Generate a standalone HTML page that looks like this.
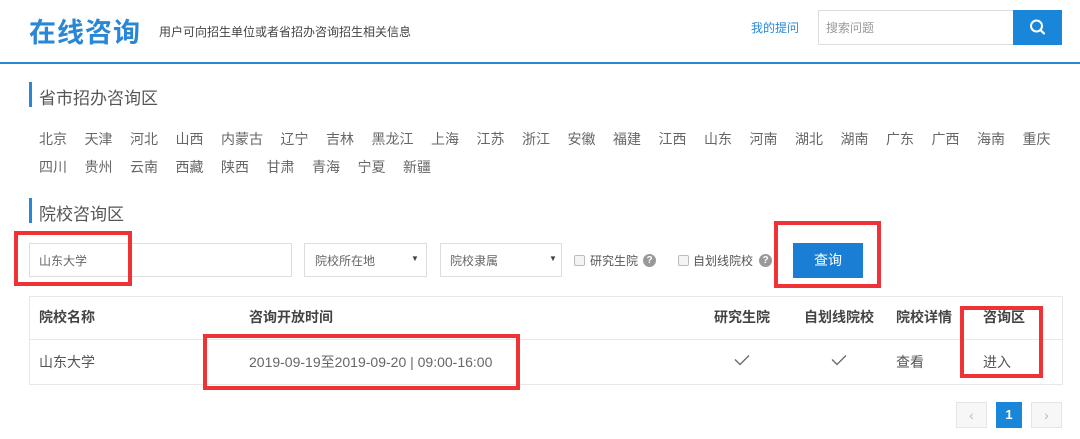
<!DOCTYPE html>
<html><head><meta charset="utf-8"><style>
*{margin:0;padding:0;box-sizing:border-box}
body{width:1080px;height:439px;overflow:hidden;background:#fff;font-family:"Liberation Sans","Noto Sans CJK SC",sans-serif;color:#555;position:relative}
.a{position:absolute;white-space:nowrap}
.title{left:29px;top:11px;font-size:27px;font-weight:bold;color:#2a87d6;letter-spacing:1px}
.sub{left:159px;top:23px;font-size:12px;color:#444}
.line{left:0;top:62px;width:1080px;height:2px;background:#2a87d6}
.bar{width:3px;background:#2a87d6}
.h{font-size:17px;color:#555}
.prov{left:39px;font-size:14px;color:#666}
.prov span{margin-right:17.5px}
.box{border:1px solid #ddd;background:#fff}
.red{border:4px solid #ef3236}
.th{font-size:14px;font-weight:bold;color:#444;top:307px}
.td{font-size:14px;color:#555;top:352px}
.cb{width:11px;height:11px;border:1px solid #bbb;border-radius:2px;background:#f4f4f4;top:255px}
.q{width:13px;height:13px;border-radius:50%;background:#999;color:#fff;font-size:10px;font-weight:bold;text-align:center;line-height:13px;top:254px}
</style></head><body>
<div class="a title">在线咨询</div>
<div class="a sub">用户可向招生单位或者省招办咨询招生相关信息</div>
<div class="a" style="left:751px;top:19px;font-size:12px;color:#2a87d6">我的提问</div>
<div class="a box" style="left:818px;top:10px;width:196px;height:35px;border-color:#ddd"></div>
<div class="a" style="left:826px;top:19px;font-size:12px;color:#999">搜索问题</div>
<div class="a" style="left:1013px;top:10px;width:49px;height:35px;background:#1a86d9">
<svg width="49" height="35" viewBox="0 0 49 35"><circle cx="23.5" cy="16" r="5.5" fill="none" stroke="#fff" stroke-width="2"/><path d="M27.5 20L31 23.5" stroke="#fff" stroke-width="2.2" stroke-linecap="round"/></svg></div>
<div class="a line"></div>

<div class="a bar" style="left:29px;top:82px;height:25px"></div>
<div class="a h" style="left:39px;top:84px">省市招办咨询区</div>
<div class="a prov" style="top:129px"><span>北京</span><span>天津</span><span>河北</span><span>山西</span><span>内蒙古</span><span>辽宁</span><span>吉林</span><span>黑龙江</span><span>上海</span><span>江苏</span><span>浙江</span><span>安徽</span><span>福建</span><span>江西</span><span>山东</span><span>河南</span><span>湖北</span><span>湖南</span><span>广东</span><span>广西</span><span>海南</span><span>重庆</span></div>
<div class="a prov" style="top:157px"><span>四川</span><span>贵州</span><span>云南</span><span>西藏</span><span>陕西</span><span>甘肃</span><span>青海</span><span>宁夏</span><span>新疆</span></div>

<div class="a bar" style="left:29px;top:198px;height:25px"></div>
<div class="a h" style="left:39px;top:200px">院校咨询区</div>

<div class="a box" style="left:29px;top:243px;width:263px;height:34px"></div>
<div class="a" style="left:39px;top:252px;font-size:12px;color:#666">山东大学</div>
<div class="a box" style="left:304px;top:243px;width:123px;height:34px"></div>
<div class="a" style="left:315px;top:252px;font-size:12px;color:#666">院校所在地</div>
<div class="a" style="left:411px;top:254px;font-size:8px;color:#444">▼</div>
<div class="a box" style="left:440px;top:243px;width:122px;height:34px"></div>
<div class="a" style="left:450px;top:252px;font-size:12px;color:#666">院校隶属</div>
<div class="a" style="left:549px;top:254px;font-size:8px;color:#444">▼</div>
<div class="a cb" style="left:574px"></div>
<div class="a" style="left:590px;top:252px;font-size:12px;color:#555">研究生院</div>
<div class="a q" style="left:643px">?</div>
<div class="a cb" style="left:678px"></div>
<div class="a" style="left:693px;top:252px;font-size:12px;color:#555">自划线院校</div>
<div class="a q" style="left:759px">?</div>
<div class="a" style="left:793px;top:243px;width:70px;height:35px;background:#1a7fd4;color:#fff;font-size:14px;text-align:center;line-height:35px">查询</div>

<div class="a box" style="left:29px;top:296px;width:1034px;height:89px;border-color:#e8e8e8"></div>
<div class="a" style="left:30px;top:339px;width:1032px;height:1px;background:#e8e8e8"></div>
<div class="a th" style="left:39px">院校名称</div>
<div class="a th" style="left:249px">咨询开放时间</div>
<div class="a th" style="left:714px">研究生院</div>
<div class="a th" style="left:804px">自划线院校</div>
<div class="a th" style="left:896px">院校详情</div>
<div class="a th" style="left:983px">咨询区</div>
<div class="a td" style="left:39px">山东大学</div>
<div class="a td" style="left:249px;color:#666">2019-09-19至2019-09-20 | 09:00-16:00</div>
<svg class="a" style="left:734px;top:354px" width="16" height="12"><path d="M1 5.5L6 10.5L15 1.5" fill="none" stroke="#666" stroke-width="1.3"/></svg>
<svg class="a" style="left:831px;top:354px" width="16" height="12"><path d="M1 5.5L6 10.5L15 1.5" fill="none" stroke="#666" stroke-width="1.3"/></svg>
<div class="a td" style="left:896px">查看</div>
<div class="a td" style="left:983px">进入</div>

<div class="a box" style="left:956px;top:402px;width:31px;height:26px;background:#f7f7f7;border-color:#e5e5e5;color:#bbb;font-size:14px;text-align:center;line-height:24px">‹</div>
<div class="a" style="left:996px;top:402px;width:26px;height:26px;background:#1a86d9;color:#fff;font-size:13px;font-weight:bold;text-align:center;line-height:26px">1</div>
<div class="a box" style="left:1031px;top:402px;width:31px;height:26px;background:#f7f7f7;border-color:#e5e5e5;color:#bbb;font-size:14px;text-align:center;line-height:24px">›</div>

<div class="a red" style="left:14px;top:231px;width:118px;height:55px"></div>
<div class="a red" style="left:774px;top:221px;width:107px;height:67px"></div>
<div class="a red" style="left:203px;top:334px;width:317px;height:56px"></div>
<div class="a red" style="left:960px;top:306px;width:83px;height:72px"></div>
</body></html>
